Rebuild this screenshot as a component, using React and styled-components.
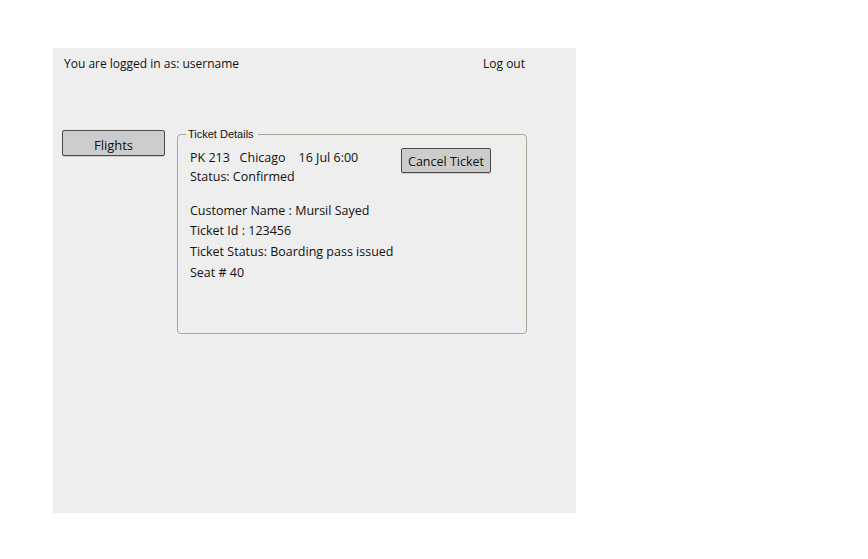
import React from "react";
import styled, { createGlobalStyle } from "styled-components";

const GlobalStyle = createGlobalStyle`
  html, body {
    margin: 0;
    padding: 0;
    background: #ffffff;
  }
  body {
    font-family: "Open Sans", "DejaVu Sans", sans-serif;
    color: #111;
  }
`;

const Page = styled.div`
  width: 868px;
  height: 559px;
  padding: 48px 0 0 53px;
  box-sizing: border-box;
`;

const Panel = styled.div`
  width: 523px;
  height: 465px;
  background: #eeeeee;
  box-sizing: border-box;
  padding: 6px 51px 0 11px;
  display: flex;
  flex-direction: column;
`;

const Header = styled.div`
  display: flex;
  justify-content: space-between;
  align-items: center;
  height: 18px;
  font-size: 12px;
`;

const Main = styled.div`
  display: grid;
  grid-template-columns: 103px 350px;
  column-gap: 12px;
  margin-top: 58px;
  margin-left: -2px;
  align-items: start;
`;

const SketchButton = styled.button`
  font-family: inherit;
  font-size: ${(p) => p.$size || 13}px;
  color: #111;
  background: #cccccc;
  border: 1.5px solid #4a4a4a;
  border-radius: 2px;
  width: ${(p) => p.$w}px;
  height: ${(p) => p.$h}px;
  padding: ${(p) => p.$top || 0}px 0 0 0;
  cursor: pointer;
  box-shadow: 0 1px 0 rgba(0, 0, 0, 0.15);
`;

const Box = styled.fieldset`
  margin: -2px 0 0 0;
  height: 206px;
  box-sizing: border-box;
  border: 1px solid #a8a697;
  border-radius: 4px;
  padding: 0 35px 0 12px;
  min-width: 0;
`;

const Legend = styled.legend`
  font-family: "Liberation Sans", Arial, sans-serif;
  font-size: 11px;
  padding: 0 4px 0 2px;
  margin-left: -4px;
  color: #111;
`;

const TopRow = styled.div`
  display: flex;
  justify-content: space-between;
  align-items: flex-start;
  margin-top: 8px;
`;

const Lines = styled.div`
  font-size: 12.5px;
  line-height: 20px;
  margin-top: ${(p) => p.$gap || 0}px;
`;

const Line = styled.div`
  white-space: pre;
  line-height: ${(p) => p.$lh || 20}px;
`;

export default function App() {
  return (
    <>
      <GlobalStyle />
      <Page>
        <Panel>
          <Header>
            <span>You are logged in as: username</span>
            <span>Log out</span>
          </Header>
          <Main>
            <SketchButton $w={103} $h={26} $top={3}>
              Flights
            </SketchButton>
            <Box>
              <Legend>Ticket Details</Legend>
              <TopRow>
                <Lines>
                  <Line $lh={19}>{"PK 213   Chicago    16 Jul 6:00"}</Line>
                  <Line $lh={19}>Status: Confirmed</Line>
                </Lines>
                <SketchButton $w={90} $h={25} $size={12.5} $top={1}>
                  Cancel Ticket
                </SketchButton>
              </TopRow>
              <Lines $gap={15}>
                <Line>Customer Name : Mursil Sayed</Line>
                <Line>Ticket Id : 123456</Line>
                <Line $lh={21}>Ticket Status: Boarding pass issued</Line>
                <Line $lh={21}>Seat # 40</Line>
              </Lines>
            </Box>
          </Main>
        </Panel>
      </Page>
    </>
  );
}
